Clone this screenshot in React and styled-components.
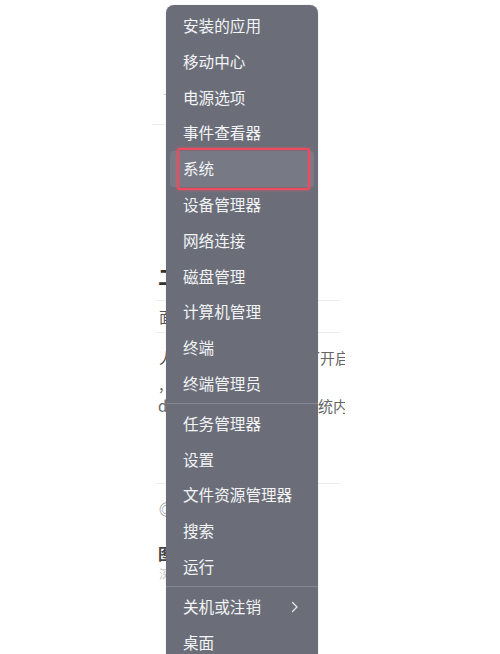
import React from "react";
import styled, { createGlobalStyle } from "styled-components";

const GlobalStyle = createGlobalStyle`
  html, body { margin: 0; padding: 0; background: #ffffff; }
  body { font-family: "Noto Sans CJK SC", "Noto Sans", sans-serif; }
`;

const Stage = styled.div`
  position: relative;
  width: 500px;
  height: 654px;
  overflow: hidden;
  background: #ffffff;
`;

/* faint page that lies behind the context menu */
const Backdrop = styled.div`
  display: flex;
  flex-direction: column;
  margin-left: 150px;
  width: 195px;
  height: 654px;
  overflow: hidden;
`;

const BgRow = styled.div`
  display: grid;
  grid-template-columns: 155px 1fr;
  align-items: center;
  height: ${(p) => p.$h}px;
  margin-top: ${(p) => p.$mt || 0}px;
  flex-shrink: 0;
`;

const LeftText = styled.span`
  padding-left: ${(p) => (p.$pl ?? 8)}px;
  white-space: nowrap;
  font-size: ${(p) => p.$size || 15}px;
  font-weight: ${(p) => (p.$bold ? 700 : 400)};
  color: ${(p) => p.$color || "#555"};
  line-height: 1;
`;

const RightText = styled.span`
  white-space: nowrap;
  font-size: 15px;
  color: #666666;
  line-height: 1;
  margin-left: ${(p) => p.$ml || 0}px;
`;

const HLine = styled.div`
  flex-shrink: 0;
  height: 1px;
  margin-top: ${(p) => p.$mt || 0}px;
  margin-left: ${(p) => p.$ml || 6}px;
  width: ${(p) => (p.$w ? `${p.$w}px` : "184px")};
  background: #ededed;
`;

/* the context menu itself */
const Menu = styled.ul`
  position: absolute;
  left: 166px;
  top: 5px;
  width: 152px;
  height: 680px;
  margin: 0;
  padding: 3px 0 0;
  list-style: none;
  box-sizing: border-box;
  background: #6b6e79;
  border-radius: 8px;
  box-shadow: 0 0 2px rgba(0, 0, 0, 0.12);
  z-index: 2;
`;

const Item = styled.li`
  position: relative;
  display: flex;
  align-items: center;
  justify-content: space-between;
  height: 35.8px;
  box-sizing: border-box;
  padding: 0 ${(p) => (p.$active ? 15 : 19)}px 0 ${(p) => (p.$active ? 13 : 17)}px;
  margin: 0 ${(p) => (p.$active ? 4 : 0)}px;
  border-radius: 4px;
  background: ${(p) => (p.$active ? "#777a85" : "transparent")};
  color: #f3f4f6;
  font-size: 15.6px;
  line-height: 1;
  white-space: nowrap;

  ${(p) =>
    p.$active &&
    `
    &::after {
      content: "";
      position: absolute;
      left: 7px;
      right: 4px;
      top: -3px;
      bottom: -3px;
      border: 2.5px solid #ee4a5e;
      border-radius: 2px;
      box-shadow: 0 0 3px rgba(255, 90, 110, 0.7), inset 0 0 2px rgba(255, 90, 110, 0.5);
    }
  `}
`;

const Separator = styled.li`
  height: 1px;
  margin: 1.5px 0;
  background: #858893;
`;

const Chevron = () => (
  <svg width="9" height="12" viewBox="0 0 9 12" fill="none">
    <polyline
      points="2.5,1.5 7,6 2.5,10.5"
      stroke="#e6e7ea"
      strokeWidth="1.3"
      strokeLinecap="round"
      strokeLinejoin="round"
    />
  </svg>
);

const groups = [
  [
    "安装的应用",
    "移动中心",
    "电源选项",
    "事件查看器",
    "系统",
    "设备管理器",
    "网络连接",
    "磁盘管理",
    "计算机管理",
    "终端",
    "终端管理员",
  ],
  ["任务管理器", "设置", "文件资源管理器", "搜索", "运行"],
  ["关机或注销", "桌面"],
];

export default function App() {
  return (
    <>
      <GlobalStyle />
      <Stage>
        <Backdrop>
          <BgRow $h={14} $mt={86}>
            <LeftText $pl={13} $size={10} $color="#c4c4c4">-</LeftText>
          </BgRow>
          <HLine $mt={24} $ml={2} $w={20} />
          <BgRow $h={20} $mt={142}>
            <LeftText $pl={8} $size={20} $bold $color="#333">二</LeftText>
          </BgRow>
          <HLine $mt={13} />
          <BgRow $h={31}>
            <LeftText $pl={9} $color="#555">面</LeftText>
          </BgRow>
          <HLine />
          <BgRow $h={18} $mt={15}>
            <LeftText $pl={9} $color="#555">人</LeftText>
            <RightText>可开启</RightText>
          </BgRow>
          <BgRow $h={18} $mt={10}>
            <LeftText $pl={8} $size={14} $color="#666">，</LeftText>
          </BgRow>
          <BgRow $h={18} $mt={2}>
            <LeftText $pl={8} $size={15} $color="#666">d</LeftText>
            <RightText $ml={-2}>系统内</RightText>
          </BgRow>
          <HLine $mt={69} />
          <BgRow $h={20} $mt={14}>
            <LeftText $pl={9} $size={15} $color="#8a8a8a">◎</LeftText>
          </BgRow>
          <BgRow $h={20} $mt={25}>
            <LeftText $pl={8} $size={16} $bold $color="#444">图</LeftText>
          </BgRow>
          <BgRow $h={16} $mt={3}>
            <LeftText $pl={9} $size={12} $color="#c2c2c2">深</LeftText>
          </BgRow>
        </Backdrop>

        <Menu>
          {groups.map((group, gi) => (
            <React.Fragment key={gi}>
              {gi > 0 && <Separator />}
              {group.map((label) => (
                <Item key={label} $active={label === "系统"}>
                  <span>{label}</span>
                  {label === "关机或注销" && <Chevron />}
                </Item>
              ))}
            </React.Fragment>
          ))}
        </Menu>
      </Stage>
    </>
  );
}
